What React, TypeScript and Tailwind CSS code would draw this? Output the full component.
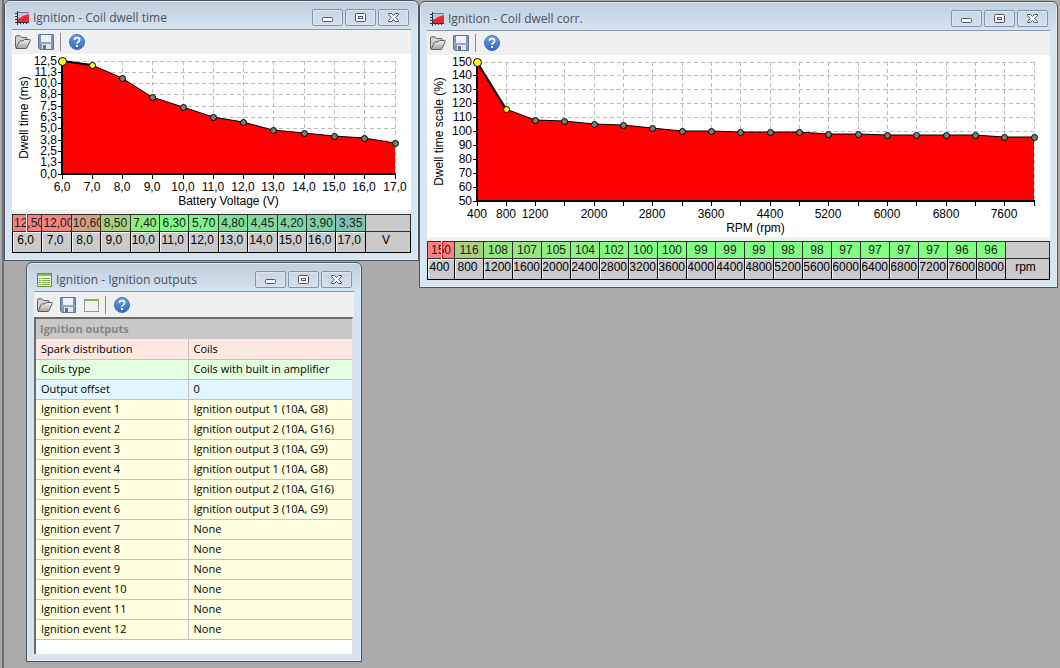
import type { ReactNode } from 'react'

type CurveData = {
  xs: string[]
  values: string[]
  colors: string[]
  unit: string
}

const dwellTime: CurveData = {
  xs: ['6,0', '7,0', '8,0', '9,0', '10,0', '11,0', '12,0', '13,0', '14,0', '15,0', '16,0', '17,0'],
  values: ['12,50', '12,00', '10,60', '8,50', '7,40', '6,30', '5,70', '4,80', '4,45', '4,20', '3,90', '3,35'],
  colors: ['#f98080', '#f28580', '#d2a27f', '#a8cf7c', '#90ee7f', '#80fb86', '#81f090', '#7fe09b', '#7fdaa0', '#80d5a5', '#7fcdaa', '#80c3b3'],
  unit: 'V',
}

const dwellCorr: CurveData = {
  xs: Array.from({ length: 20 }, (_, i) => String(400 + i * 400)),
  values: ['150', '116', '108', '107', '105', '104', '102', '100', '100', '99', '99', '99', '98', '98', '97', '97', '97', '97', '96', '96'],
  colors: ['#ff8080', '#aad07f', '#96e67f', '#94e87f', '#8ef07f', '#8bf37f', '#86fa80', ...Array(13).fill('#80ff82')],
  unit: 'rpm',
}

const outputs = [
  { name: 'Spark distribution', value: 'Coils', bg: 'bg-[#ffe8e1]' },
  { name: 'Coils type', value: 'Coils with built in amplifier', bg: 'bg-[#e5ffe1]' },
  { name: 'Output offset', value: '0', bg: 'bg-[#e1f6ff]' },
  ...['1 (10A, G8)', '2 (10A, G16)', '3 (10A, G9)', '1 (10A, G8)', '2 (10A, G16)', '3 (10A, G9)'].map((v, i) => ({
    name: `Ignition event ${i + 1}`,
    value: `Ignition output ${v}`,
    bg: 'bg-[#ffffe1]',
  })),
  ...[7, 8, 9, 10, 11, 12].map(n => ({ name: `Ignition event ${n}`, value: 'None', bg: 'bg-[#ffffe1]' })),
]

const toNumber = (s: string) => Number(s.replace(',', '.'))

function ChartIcon() {
  return (
    <svg width="14" height="14" viewBox="0 0 14 14" aria-hidden="true">
      <rect x="2" y="1" width="12" height="10" fill="#b9c9dc" />
      <path d="M2 8L5 7L8 5L11 4L14 3V11H2Z" fill="#f0262b" />
      <path d="M2.5 0V14M0 11.5H14M0 2.5H2M0 5.5H2M0 8.5H2M5.5 11V13M8.5 11V13M11.5 11V13" stroke="#26324a" fill="none" />
      <path d="M3 1.5H14" stroke="#6c7a92" />
    </svg>
  )
}

function ListIcon() {
  return (
    <svg width="15" height="14" viewBox="0 0 15 14" aria-hidden="true">
      <rect x=".5" y=".5" width="14" height="13" fill="#f4fbe9" stroke="#62923b" />
      <rect x="1" y="1" width="13" height="2" fill="#8abf53" />
      <path d="M2 5.5H4M2 7.5H4M2 9.5H4M2 11.5H4M5 5.5H13M5 7.5H13M5 9.5H13M5 11.5H13" stroke="#79a94b" />
    </svg>
  )
}

function FolderIcon() {
  return (
    <svg width="16" height="15" viewBox="0 0 16 15" aria-hidden="true">
      <defs>
        <linearGradient id="folder" x1="0" y1="0" x2="0" y2="1">
          <stop offset="0" stopColor="#f2f2f2" />
          <stop offset="1" stopColor="#a2a2a2" />
        </linearGradient>
      </defs>
      <path d="M.5 12.5V2Q.5 .8 1.7 .8H5L6.5 2.5H11Q12 2.5 12 3.5V5.5" fill="#d2d2d2" stroke="#626262" />
      <path d="M1 13.5L4.2 6.5Q4.5 6 5 6L8 5.8L9.5 4.5H14.6Q15.6 4.5 15.2 5.5L12 12.8Q11.6 13.5 11 13.5Z" fill="url(#folder)" stroke="#5c5c5c" />
    </svg>
  )
}

function SaveIcon() {
  return (
    <svg width="16" height="16" viewBox="0 0 16 16" aria-hidden="true">
      <path d="M.5 1Q.5 .5 1 .5H15Q15.5 .5 15.5 1V15.5H2L.5 14Z" fill="#7d95b8" stroke="#5f7699" />
      <rect x="3" y="1" width="10" height="7" fill="#eef1f5" />
      <rect x="1" y="8" width="14" height="2" fill="#92a7c5" />
      <rect x="4" y="10" width="9" height="5" fill="#e3e7ed" />
      <rect x="5" y="11" width="3" height="4" fill="#5b7195" />
    </svg>
  )
}

function PanelIcon() {
  return (
    <svg width="15" height="13" viewBox="0 0 15 13" aria-hidden="true">
      <rect x=".5" y=".5" width="14" height="12" fill="#f1f1ee" stroke="#969c94" />
      <rect x="0" y="0" width="15" height="2" fill="#81b45d" />
    </svg>
  )
}

function HelpIcon() {
  return (
    <svg width="16" height="16" viewBox="0 0 16 16" aria-hidden="true">
      <defs>
        <linearGradient id="help" x1="0" y1="0" x2="0" y2="1">
          <stop offset="0" stopColor="#6f9fe2" />
          <stop offset="1" stopColor="#2f66c0" />
        </linearGradient>
      </defs>
      <circle cx="8" cy="8" r="7.5" fill="url(#help)" stroke="#3f6fba" />
      <path d="M5.5 6Q5.5 3.7 8 3.7T10.5 6Q10.5 7.2 9.2 8Q8 8.7 8 9.8" fill="none" stroke="#fff" strokeWidth="1.8" />
      <rect x="7" y="11" width="2" height="2" fill="#fff" />
    </svg>
  )
}

function CaptionButton({ label, children }: { label: string; children: ReactNode }) {
  return (
    <button
      type="button"
      aria-label={label}
      className="flex h-[17px] w-[31px] items-center justify-center rounded-xs border border-[#8593ae] bg-linear-to-b from-[#c9d7e6] to-[#d3dfec] shadow-[inset_0_0_0_1px_#dbe5f0]"
    >
      <svg width="13" height="11" viewBox="0 0 13 11" stroke="#50566a" fill="#fbfcfd" aria-hidden="true">
        {children}
      </svg>
    </button>
  )
}

type WindowProps = {
  title: string
  icon: ReactNode
  className: string
  extraTool?: boolean
  children: ReactNode
}

function MdiWindow({ title, icon, className, extraTool, children }: WindowProps) {
  return (
    <section
      className={`absolute flex flex-col rounded-t-md border border-[#4b535e] bg-[#d7e4f1] bg-[linear-gradient(#c0cedd,#d7e4f1_30px)] px-[7px] pb-[7px] shadow-[inset_0_0_0_1px_#e3edf6] ${className}`}
    >
      <header className="flex h-[29px] shrink-0 items-center gap-1 border-b border-[#8796aa] pt-[5px] pr-[2px] pl-[3px]">
        {icon}
        <h2 className="grow text-xs whitespace-nowrap text-[#4a5260]">{title}</h2>
        <div className="flex gap-[2px]">
          <CaptionButton label="Minimize">
            <rect x="1.5" y="5.5" width="10" height="4" rx="1" />
          </CaptionButton>
          <CaptionButton label="Maximize">
            <rect x="1.5" y="1.5" width="10" height="8" rx="1" />
            <rect x="4.5" y="4.5" width="4" height="2" />
          </CaptionButton>
          <CaptionButton label="Close">
            <path d="M1.5 1.5H4.5L6.5 3.5L8.5 1.5H11.5V2.5L8.7 5.5L11.5 8.5V9.5H8.5L6.5 7.5L4.5 9.5H1.5V8.5L4.3 5.5L1.5 2.5Z" />
          </CaptionButton>
        </div>
      </header>
      <div className={`flex shrink-0 items-center bg-[#f0f0f0] pl-[3px] ${extraTool ? 'h-[25px] pt-px' : 'h-6'}`}>
        <button type="button" aria-label="Open"><FolderIcon /></button>
        <button type="button" aria-label="Save" className="ml-[7px]"><SaveIcon /></button>
        {extraTool && <button type="button" aria-label="Show panel" className="ml-2"><PanelIcon /></button>}
        <div className="ml-[6px] h-[18px] w-px bg-[#8d8d8d]" />
        <button type="button" aria-label="Help" className="ml-2"><HelpIcon /></button>
      </div>
      {children}
    </section>
  )
}

type CurveChartProps = {
  data: CurveData
  width: number
  height: number
  right: number
  bottom: number
  min: number
  max: number
  yLabels: string[]
  xTitle: string
  yTitle: string
  showX: (i: number) => boolean
}

function CurveChart({ data, width, height, right, bottom, min, max, yLabels, xTitle, yTitle, showX }: CurveChartProps) {
  const left = 50
  const top = 7
  const px = (i: number) => Math.floor(left + (i * (right - left)) / (data.xs.length - 1))
  const py = (i: number) => Math.floor(top + (i * (bottom - top)) / (yLabels.length - 1))
  const points = data.values.map((v, i) => ({
    x: px(i),
    y: Math.floor(bottom - ((toNumber(v) - min) / (max - min)) * (bottom - top)),
  }))
  const line = points.map(p => `${p.x},${p.y}`).join(' ')

  return (
    <svg
      viewBox={`0 0 ${width} ${height}`}
      className="block w-full bg-white font-['Liberation_Sans',Arial,sans-serif] text-xs"
      role="img"
      aria-label={`${yTitle} by ${xTitle}`}
    >
      <g stroke="#bcbcbc" strokeDasharray="4 3" shapeRendering="crispEdges">
        {yLabels.map((l, i) => <line key={l} x1={left} x2={right} y1={py(i) + 0.5} y2={py(i) + 0.5} />)}
        {data.xs.map((x, i) => <line key={x} x1={px(i) + 0.5} x2={px(i) + 0.5} y1={top} y2={bottom} />)}
      </g>
      <polygon points={`${left},${bottom} ${line} ${right},${bottom}`} fill="#ff0000" />
      <polyline points={line} fill="none" stroke="#000" />
      <line x1={points[0].x} y1={points[0].y} x2={points[1].x} y2={points[1].y} stroke="#000" strokeWidth="2" />
      <path d={`M${left} ${top}V${bottom}H${right + 1}`} fill="none" stroke="#000" strokeWidth="2" />
      <g stroke="#000">
        {yLabels.map((l, i) => <line key={l} x1={left - 4} x2={left} y1={py(i) + 0.5} y2={py(i) + 0.5} />)}
        {data.xs.map((x, i) => <line key={x} x1={px(i) + 0.5} x2={px(i) + 0.5} y1={bottom} y2={bottom + 5} />)}
      </g>
      {points.map((p, i) => (
        <circle key={p.x} cx={p.x + 0.5} cy={p.y + 0.5} r={i === 0 ? 4 : 3} fill={i < 2 ? '#ffff20' : '#75807a'} stroke="#000" />
      ))}
      {yLabels.map((l, i) => <text key={l} x={left - 5} y={py(i) + 4} textAnchor="end">{l}</text>)}
      {data.xs.map((x, i) => showX(i) && <text key={x} x={px(i)} y={bottom + 17} textAnchor="middle">{x}</text>)}
      <text x={(left + right) / 2} y={bottom + 31} textAnchor="middle">{xTitle}</text>
      <text transform={`translate(16 ${(top + bottom) / 2}) rotate(-90)`} textAnchor="middle">{yTitle}</text>
    </svg>
  )
}

function CurveTable({ data, firstCol, lastCol }: { data: CurveData; firstCol?: string; lastCol: string }) {
  return (
    <div className="relative border-t-4 border-[#f0f0f0]">
      <table className="w-full table-fixed border-collapse border border-[#202020] font-['Liberation_Sans',Arial,sans-serif] text-xs leading-4">
        <colgroup>
          {data.xs.map((x, i) => <col key={x} className={i === 0 ? firstCol : undefined} />)}
          <col className={lastCol} />
        </colgroup>
        <tbody>
          <tr className="h-[17px]">
            {data.values.map((v, i) => (
              <td key={i} className="border border-[#303030] p-0 text-[#202020]" style={{ background: data.colors[i] }}>
                <span className={`flex overflow-hidden ${v.length > 4 ? 'justify-start pl-px' : 'justify-center'}`}>{v}</span>
              </td>
            ))}
            <td className="border border-[#303030] bg-[#cacaca]" />
          </tr>
          <tr className="h-[21px]">
            {data.xs.map(x => (
              <td key={x} className="border border-black bg-[#cacaca] p-0 pb-1 shadow-[inset_1px_1px_0_#f4f4f4]">
                <span className={`ml-px flex overflow-hidden ${/^\d{4}$/.test(x) ? 'justify-end pr-px' : 'justify-center pr-1'}`}>{x}</span>
              </td>
            ))}
            <td className="border border-black bg-[#cacaca] p-0 pr-1 pb-1 text-center">{data.unit}</td>
          </tr>
        </tbody>
      </table>
      {/* current position marker */}
      <div className="absolute top-0 left-[14px] h-[18px] w-[2px] border-l border-white bg-[#d01818]" />
    </div>
  )
}

export default function App() {
  return (
    <main className="relative h-screen min-h-[664px] overflow-hidden border-l-2 border-[#a8a8a8] bg-[#ababab] font-['Open_Sans','Noto_Sans',sans-serif] text-[11px] leading-4 text-black shadow-[inset_2px_0_0_#6e6e6e]">
      <MdiWindow title="Ignition - Coil dwell time" icon={<ChartIcon />} className="top-0 left-[2px] w-[415px]">
        <CurveChart
          data={dwellTime}
          width={399}
          height={156}
          right={383}
          bottom={120}
          min={0}
          max={12.5}
          yLabels={['12,5', '11,3', '10,0', '8,8', '7,5', '6,3', '5,0', '3,8', '2,5', '1,3', '0,0']}
          xTitle="Battery Voltage (V)"
          yTitle="Dwell time (ms)"
          showX={() => true}
        />
        <CurveTable data={dwellTime} lastCol="w-[45px]" />
      </MdiWindow>

      <MdiWindow title="Ignition - Coil dwell corr." icon={<ChartIcon />} className="top-px left-[417px] w-[639px]">
        <CurveChart
          data={dwellCorr}
          width={623}
          height={182}
          right={607}
          bottom={146}
          min={50}
          max={150}
          yLabels={['150', '140', '130', '120', '110', '100', '90', '80', '70', '60', '50']}
          xTitle="RPM (rpm)"
          yTitle="Dwell time scale (%)"
          showX={i => i < 2 || i % 2 === 0}
        />
        <CurveTable data={dwellCorr} firstCol="w-[27px]" lastCol="w-[44px]" />
      </MdiWindow>

      <MdiWindow title="Ignition - Ignition outputs" icon={<ListIcon />} extraTool className="top-[262px] left-6 w-[336px]">
        <div className="mr-px border-t-2 border-r border-l-2 border-[#6b6b6b] border-r-[#e3e3e3] bg-white pb-[14px]">
          <table className="w-full table-fixed border-collapse text-left">
            <colgroup>
              <col className="w-[152px]" />
              <col />
            </colgroup>
            <thead>
              <tr className="h-5 bg-[#c8c8c8]">
                <th colSpan={2} className="px-1 py-0 font-bold text-[#868686]">Ignition outputs</th>
              </tr>
            </thead>
            <tbody>
              {outputs.map(row => (
                <tr key={row.name} className={`h-5 border-b border-[#c3c3bd] ${row.bg}`}>
                  <th scope="row" className="border-r border-[#c3c3bd] py-0 pr-1 pl-[5px] font-normal">{row.name}</th>
                  <td className="py-0 pr-1 pl-[5px]">{row.value}</td>
                </tr>
              ))}
            </tbody>
          </table>
        </div>
      </MdiWindow>
    </main>
  )
}
